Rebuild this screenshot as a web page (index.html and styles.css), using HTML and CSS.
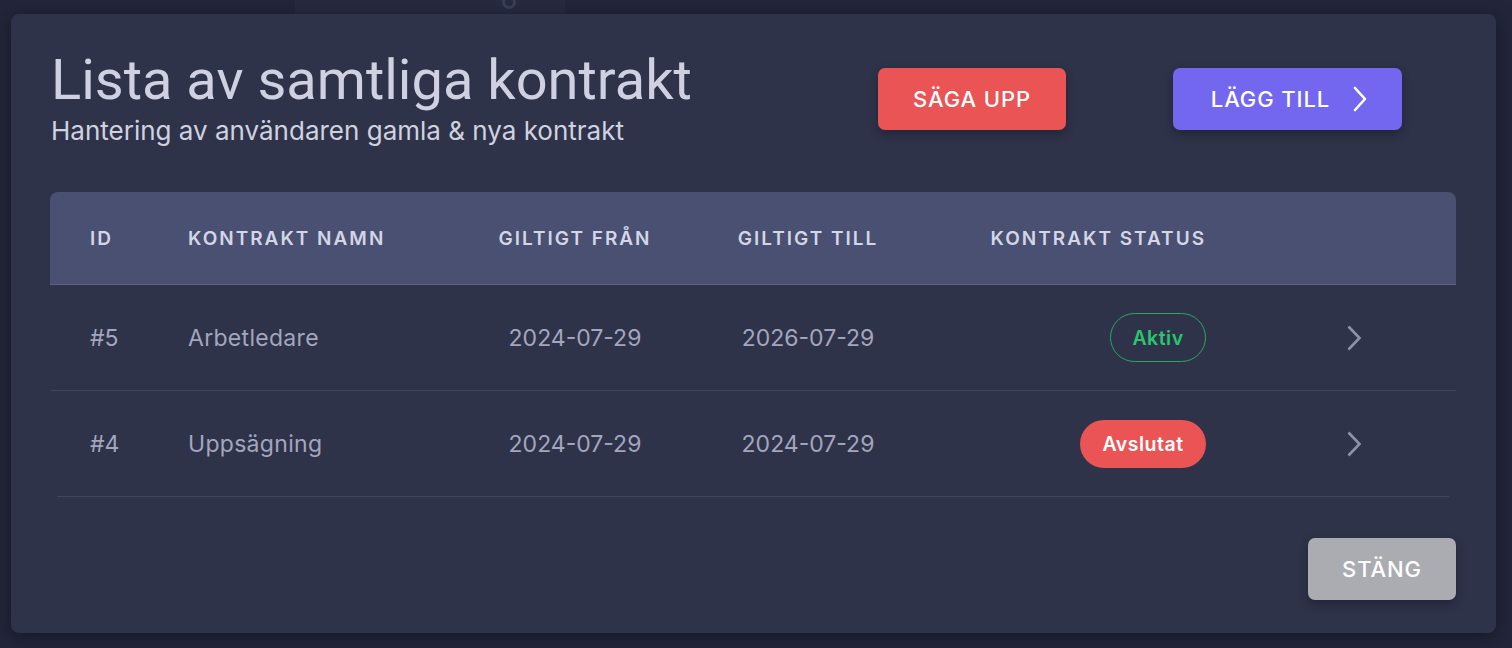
FILE: index.html
```html
<!DOCTYPE html>
<html lang="sv">
<head>
<meta charset="utf-8">
<title>Kontrakt</title>
<link rel="stylesheet" href="styles.css">
</head>
<body>
<div class="backdrop">
  <div class="bg-bar"><span class="bg-icon"></span></div>
</div>
<div class="modal">
  <div class="modal-head">
    <div class="titles">
      <h1 class="title">Lista av samtliga kontrakt</h1>
      <p class="subtitle">Hantering av användaren gamla &amp; nya kontrakt</p>
    </div>
    <div class="actions">
      <button class="btn btn-danger">SÄGA UPP</button>
      <button class="btn btn-primary">LÄGG TILL
        <svg class="btn-chev" width="16" height="26" viewBox="0 0 16 26"><path d="M3 2 L13 13 L3 24" fill="none" stroke="#fff" stroke-width="2.6" stroke-linecap="round" stroke-linejoin="round"/></svg>
      </button>
    </div>
  </div>

  <div class="table">
    <div class="thead row-grid">
      <div class="c-id">ID</div>
      <div class="c-name">KONTRAKT NAMN</div>
      <div class="c-date">GILTIGT FRÅN</div>
      <div class="c-date">GILTIGT TILL</div>
      <div class="c-status">KONTRAKT STATUS</div>
      <div class="c-act"></div>
    </div>
    <div class="trow row-grid">
      <div class="c-id">#5</div>
      <div class="c-name">Arbetledare</div>
      <div class="c-date">2024-07-29</div>
      <div class="c-date">2026-07-29</div>
      <div class="c-status"><span class="badge badge-active">Aktiv</span></div>
      <div class="c-act"><svg width="16" height="26" viewBox="0 0 16 26"><path d="M2.5 1.5 L13.5 13 L2.5 24.5" fill="none" stroke="#8e91a8" stroke-width="2.6"/></svg></div>
    </div>
    <div class="trow row-grid last">
      <div class="c-id">#4</div>
      <div class="c-name">Uppsägning</div>
      <div class="c-date">2024-07-29</div>
      <div class="c-date">2024-07-29</div>
      <div class="c-status"><span class="badge badge-ended">Avslutat</span></div>
      <div class="c-act"><svg width="16" height="26" viewBox="0 0 16 26"><path d="M2.5 1.5 L13.5 13 L2.5 24.5" fill="none" stroke="#8e91a8" stroke-width="2.6"/></svg></div>
    </div>
  </div>

  <div class="modal-foot">
    <button class="btn btn-grey">STÄNG</button>
  </div>
</div>
</body>
</html>
```
FILE: styles.css
```css
* { box-sizing: border-box; }
html, body { margin: 0; padding: 0; }
body {
  background: #23263a;
  font-family: Inter, Roboto, "Liberation Sans", Arial, sans-serif;
  width: 1512px;
  height: 648px;
  overflow: hidden;
  padding: 14px 16px 0 11px;
  position: relative;
}
.backdrop { position: absolute; left: 0; top: 0; width: 100%; height: 14px; }
.bg-bar {
  position: absolute; left: 295px; top: 0; width: 270px; height: 14px;
  background: #272a40;
}
.bg-icon {
  position: absolute; left: 207px; top: -5px; width: 14px; height: 14px;
  border: 3px solid #3b3f58; border-radius: 50%;
}
.modal {
  position: relative;
  width: 1485px;
  height: 619px;
  background: #2f3349;
  border-radius: 8px;
  box-shadow: 0 4px 18px rgba(10, 12, 25, 0.55);
  padding: 0 40px 0 39px;
  display: flex;
  flex-direction: column;
}
.modal-head {
  display: flex;
  justify-content: space-between;
  align-items: flex-start;
  height: 178px;
}
.titles { padding: 38px 0 0 1px; }
.title {
  margin: 0;
  font-family: Roboto, "Liberation Sans", Arial, sans-serif;
  font-weight: 400;
  font-size: 56px;
  line-height: 56px;
  color: #cfd1e2;
  letter-spacing: 0;
}
.subtitle {
  margin: 8px 0 0;
  font-size: 26px;
  line-height: 30px;
  color: #d0d2e0;
  letter-spacing: 0;
}
.actions {
  display: flex;
  gap: 107px;
  padding-top: 54px;
  padding-right: 54px;
}
.btn {
  border: 0;
  border-radius: 7px;
  height: 62px;
  color: #fff;
  font-family: inherit;
  font-size: 22px;
  font-weight: 500;
  letter-spacing: 0.9px;
  display: inline-flex;
  align-items: center;
  justify-content: center;
  box-shadow: 0 4px 10px rgba(15, 17, 30, 0.45);
}
.btn-danger { background: #ea5455; width: 188px; }
.btn-primary { background: #7367f0; width: 229px; gap: 22px; padding-left: 10px; }
.btn-chev { display: block; }
.btn-grey { background: #abacb2; width: 148px; }

.table { display: flex; flex-direction: column; }
.row-grid {
  display: grid;
  grid-template-columns: 98px 282px 210px 256px 270px 1fr;
  padding-left: 40px;
  align-items: center;
}
.thead {
  background: #4a5072;
  border-radius: 8px 8px 0 0;
  height: 93px;
  border-bottom: 1px solid #5e6383;
  color: #d3d6e6;
  font-size: 19px;
  font-weight: 600;
  letter-spacing: 2px;
}
.trow {
  height: 106px;
  border-bottom: 1px solid #41455e;
  color: #a3a6be;
  font-size: 23px;
  font-weight: 400;
}
.c-name { letter-spacing: 0.3px; }
.thead .c-name { letter-spacing: 2px; }
.trow.last { margin: 0 7px; padding-left: 33px; }
.c-date { text-align: center; }
.c-status { display: flex; justify-content: flex-end; }
.c-act { display: flex; justify-content: flex-end; padding-right: 94px; }
.trow.last .c-act { padding-right: 87px; }
.c-act svg { display: block; }
.badge {
  display: inline-flex;
  align-items: center;
  justify-content: center;
  border-radius: 25px;
  font-size: 19.5px;
  font-weight: 600;
  letter-spacing: 0.5px;
}
.badge-active {
  width: 96px; height: 49px;
  border: 1px solid #28a765;
  color: #28c76f;
}
.badge-ended {
  width: 126px; height: 48px;
  background: #ea5455;
  color: #fff;
}
.modal-foot {
  display: flex;
  justify-content: flex-end;
  padding-top: 41px;
}
```
